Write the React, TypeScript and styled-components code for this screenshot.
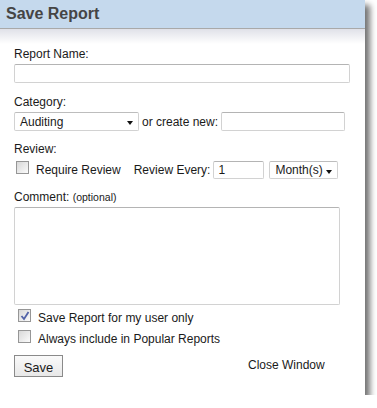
import styled, { createGlobalStyle } from 'styled-components';

const GlobalStyle = createGlobalStyle`
  html, body {
    margin: 0;
    padding: 0;
    background: #ffffff;
  }
  body {
    font-family: "Liberation Sans", Arial, sans-serif;
    font-size: 12px;
    color: #1a1a1a;
  }
`;

// Dialog window with a soft drop shadow on the right and bottom
const Window = styled.div`
  width: 365px;
  height: 395px;
  background: #fff;
  box-shadow: 5px 5px 6px rgba(0, 0, 0, 0.55);
  display: flex;
  flex-direction: column;
`;

const Header = styled.div`
  height: 28px;
  background: #c5d9ed;
  border-bottom: 1px solid #a9a9a9;
  display: flex;
  align-items: center;
  padding-left: 6px;
  font-size: 16px;
  font-weight: bold;
  color: #454545;
`;

const Band = styled.div`
  height: 15px;
  background: linear-gradient(to bottom, #e0e1e8, #ffffff);
`;

const Form = styled.div`
  padding: 0 14px;
  display: flex;
  flex-direction: column;
  white-space: nowrap;
`;

const Label = styled.div<{ $top?: number; $bottom?: number }>`
  line-height: 14px;
  margin-top: ${(p) => p.$top ?? 0}px;
  margin-bottom: ${(p) => p.$bottom ?? 3}px;
  font-size: 12px;
`;

const Small = styled.span`
  font-size: 10.5px;
`;

const TextInput = styled.div<{ $width: number; $height?: number; $left?: number }>`
  width: ${(p) => p.$width}px;
  height: ${(p) => p.$height ?? 17}px;
  margin-left: ${(p) => p.$left ?? 0}px;
  border: 1px solid #d2d2d2;
  border-top-color: #b4b4b4;
  border-radius: 2px;
  background: #fff;
  box-sizing: content-box;
  display: flex;
  align-items: center;
  padding-left: 4px;
  font-size: 12px;
  flex-shrink: 0;
`;

const Row = styled.div`
  display: flex;
  align-items: center;
`;

const Text = styled.span<{ $left?: number }>`
  margin-left: ${(p) => p.$left ?? 0}px;
  flex-shrink: 0;
`;

const Select = styled.div<{ $width: number; $height?: number; $left?: number }>`
  width: ${(p) => p.$width}px;
  height: ${(p) => p.$height ?? 17}px;
  margin-left: ${(p) => p.$left ?? 0}px;
  border: 1px solid #d2d2d2;
  border-top-color: #bdbdbd;
  border-radius: 2px;
  display: flex;
  align-items: center;
  justify-content: space-between;
  padding: 0 4px 0 5px;
  box-sizing: content-box;
  font-size: 12px;
  flex-shrink: 0;
`;

const Arrow = styled.span`
  width: 0;
  height: 0;
  border-left: 3.5px solid transparent;
  border-right: 3.5px solid transparent;
  border-top: 4px solid #111;
  margin-top: 3px;
  margin-right: 1px;
`;

const Box = styled.span`
  width: 11px;
  height: 11px;
  border: 1px solid #969696;
  background: linear-gradient(135deg, #d8d8d8, #fbfbfb);
  display: inline-flex;
  align-items: center;
  justify-content: center;
  flex-shrink: 0;
`;

const CheckRow = styled.div<{ $top?: number; $pad?: number }>`
  display: flex;
  align-items: flex-start;
  gap: 7px;
  margin-top: ${(p) => p.$top ?? 0}px;
  padding-left: ${(p) => p.$pad ?? 4}px;
  height: 18px;
  flex-shrink: 0;
`;

const CheckText = styled.span`
  line-height: 14px;
  margin-top: 2px;
`;

const Footer = styled.div`
  display: flex;
  align-items: flex-start;
  margin-top: 7px;
`;

const Button = styled.div`
  width: 47px;
  height: 18px;
  border: 1px solid #8a8a8a;
  background: linear-gradient(to bottom, #fafafa, #e8e8e8);
  display: flex;
  align-items: center;
  justify-content: center;
  font-size: 13px;
  padding-top: 2px;
  box-sizing: content-box;
`;

const CloseLink = styled.div`
  margin-left: 185px;
  margin-top: 3px;
  line-height: 14px;
  font-size: 12px;
`;

function CheckBox({ checked }: { checked?: boolean }) {
  return (
    <Box>
      {checked && (
        <svg width="10" height="10" viewBox="0 0 10 10">
          <path d="M1.5 5 L4 8 L8.5 1" fill="none" stroke="#5263a8" strokeWidth="1.8" />
        </svg>
      )}
    </Box>
  );
}

export default function App() {
  return (
    <>
      <GlobalStyle />
      <Window>
        <Header>Save Report</Header>
        <Band />
        <Form>
          <Label $top={3}>Report Name:</Label>
          <TextInput $width={330} />

          <Label $top={12}>Category:</Label>
          <Row>
            <Select $width={114}>
              <span>Auditing</span>
              <Arrow />
            </Select>
            <Text $left={3}>or create new:</Text>
            <TextInput $width={118} $left={3} />
          </Row>

          <Label $top={11} $bottom={5}>
            Review:
          </Label>
          <Row>
            <CheckRow $pad={2}>
              <CheckBox />
              <CheckText>Require Review</CheckText>
            </CheckRow>
            <Text $left={13}>Review Every:</Text>
            <TextInput $width={45} $height={16} $left={3}>
              1
            </TextInput>
            <Select $width={58} $height={16} $left={5}>
              <span>Month(s)</span>
              <Arrow />
            </Select>
          </Row>

          <Label $top={11}>
            Comment: <Small>(optional)</Small>
          </Label>
          <TextInput $width={320} $height={96} />

          <CheckRow $top={4}>
            <CheckBox checked />
            <CheckText>Save Report for my user only</CheckText>
          </CheckRow>
          <CheckRow $top={3}>
            <CheckBox />
            <CheckText>Always include in Popular Reports</CheckText>
          </CheckRow>

          <Footer>
            <Button>Save</Button>
            <CloseLink>Close Window</CloseLink>
          </Footer>
        </Form>
      </Window>
    </>
  );
}
